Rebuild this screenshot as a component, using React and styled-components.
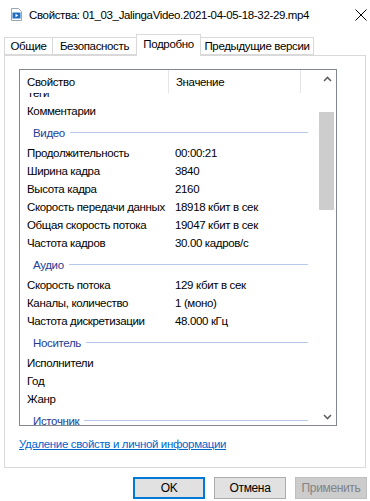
import React from 'react'
import styled, { createGlobalStyle } from 'styled-components'

const GlobalStyle = createGlobalStyle`
  html, body {
    margin: 0;
    padding: 0;
    background: #ffffff;
  }
  body {
    font-family: "Liberation Sans", Arial, sans-serif;
    font-size: 11.5px;
    letter-spacing: -0.35px;
    color: #000;
  }
`

const Window = styled.div`
  width: 370px;
  height: 501px;
  display: flex;
  flex-direction: column;
  overflow: hidden;
  background: #ffffff;
`

const TitleBar = styled.div`
  height: 29px;
  display: flex;
  align-items: center;
  padding-left: 11px;
`

const Title = styled.div`
  margin-left: 7px;
  white-space: nowrap;
`

const Close = styled.div`
  margin-left: auto;
  margin-right: 3px;
  width: 12px;
  height: 12px;
  display: flex;
`

const TabRow = styled.div`
  height: 21px;
  margin-top: 5px;
  padding-left: 4px;
  display: flex;
  align-items: flex-end;
  position: relative;
  z-index: 1;
`

const Tab = styled.div`
  box-sizing: border-box;
  width: ${p => p.$w}px;
  height: ${p => (p.$active ? 22 : 18)}px;
  margin-bottom: ${p => (p.$active ? -1 : 0)}px;
  margin-left: -1px;
  border: 1px solid #d9d9d9;
  border-bottom: ${p => (p.$active ? 'none' : '1px solid #d9d9d9')};
  background: #ffffff;
  display: flex;
  align-items: center;
  justify-content: center;
  padding-bottom: ${p => (p.$active ? 3 : 0)}px;
  white-space: nowrap;
  &:first-child {
    margin-left: 0;
  }
`

const Panel = styled.div`
  box-sizing: border-box;
  height: 413px;
  margin: 0 4px 0 4px;
  border: 1px solid #d9d9d9;
  background: #ffffff;
  padding: 13px 0 0 14px;
  display: flex;
  flex-direction: column;
`

const ListView = styled.div`
  box-sizing: border-box;
  width: 318px;
  height: 357px;
  border: 1px solid #828790;
  display: flex;
`

const ListMain = styled.div`
  width: 299px;
  display: flex;
  flex-direction: column;
  overflow: hidden;
`

const Header = styled.div`
  height: 23px;
  display: flex;
  flex-shrink: 0;
  position: relative;
  z-index: 1;
  background: #ffffff;
`

const HeaderCell = styled.div`
  box-sizing: border-box;
  width: ${p => p.$w}px;
  padding-left: 7px;
  padding-top: 1px;
  display: flex;
  align-items: center;
  border-right: ${p => (p.$sep ? '1px solid #e5e5e5' : 'none')};
  white-space: nowrap;
`

const Body = styled.div`
  flex: 1;
  overflow: hidden;
`

const Rows = styled.div`
  margin-top: -9px;
`

const Row = styled.div`
  height: 18px;
  display: grid;
  grid-template-columns: 148px 1fr;
  align-items: center;
  white-space: nowrap;
`

const Cell = styled.div`
  padding-left: 7px;
  overflow: hidden;
`

const Group = styled.div`
  height: 24px;
  display: flex;
  align-items: center;
  padding: 1px 11px 0 13px;
  box-sizing: border-box;
  color: #1e3c96;
  &::after {
    content: "";
    flex: 1;
    height: 1px;
    margin-left: 5px;
    background: #b6c9ea;
  }
`

const ScrollBar = styled.div`
  width: 17px;
  display: flex;
  flex-direction: column;
`

const ScrollArrow = styled.div`
  height: 17px;
  display: flex;
  align-items: center;
  justify-content: center;
`

const Track = styled.div`
  flex: 1;
  padding-top: 25px;
`

const Thumb = styled.div`
  width: 15px;
  height: 98px;
  background: #cdcdcd;
`

const Link = styled.a`
  margin-top: 11px;
  color: #0066cc;
  text-decoration: underline;
  align-self: flex-start;
  line-height: 15px;
`

const ButtonRow = styled.div`
  display: flex;
  justify-content: flex-end;
  gap: 9px;
  margin-top: 9px;
  padding-right: 3px;
`

const Button = styled.div`
  box-sizing: border-box;
  width: 72px;
  height: 22px;
  display: flex;
  align-items: center;
  justify-content: center;
  font-size: 12px;
  background: ${p => (p.$disabled ? '#cccccc' : '#e1e1e1')};
  color: ${p => (p.$disabled ? '#838383' : '#000')};
  border: ${p => (p.$default ? '2px solid #0078d7' : p.$disabled ? '1px solid #bfbfbf' : '1px solid #adadad')};
`

const FileIcon = () => (
  <svg width="11" height="13" viewBox="0 0 11 13">
    <path d="M0.5 0.5 H7.5 L10.5 3.5 V12.5 H0.5 Z" fill="#fff" stroke="#9aa4b0" />
    <rect x="1.5" y="4.5" width="8" height="6" fill="#1e6fc4" />
    <path d="M4.5 5.8 L7.2 7.5 L4.5 9.2 Z" fill="#fff" />
  </svg>
)

const Chevron = ({ up }) => (
  <svg width="9" height="6" viewBox="0 0 9 6">
    <polyline
      points={up ? '1,5 4.5,1.5 8,5' : '1,1 4.5,4.5 8,1'}
      fill="none"
      stroke="#606060"
      strokeWidth="1.6"
    />
  </svg>
)

const items = [
  { name: 'Теги' },
  { name: 'Комментарии' },
  { group: 'Видео' },
  { name: 'Продолжительность', value: '00:00:21' },
  { name: 'Ширина кадра', value: '3840' },
  { name: 'Высота кадра', value: '2160' },
  { name: 'Скорость передачи данных', value: '18918 кбит в сек' },
  { name: 'Общая скорость потока', value: '19047 кбит в сек' },
  { name: 'Частота кадров', value: '30.00 кадров/с' },
  { group: 'Аудио' },
  { name: 'Скорость потока', value: '129 кбит в сек' },
  { name: 'Каналы, количество', value: '1 (моно)' },
  { name: 'Частота дискретизации', value: '48.000 кГц' },
  { group: 'Носитель' },
  { name: 'Исполнители' },
  { name: 'Год' },
  { name: 'Жанр' },
  { group: 'Источник' },
]

const tabs = [
  { label: 'Общие', w: 49 },
  { label: 'Безопасность', w: 85 },
  { label: 'Подробно', w: 65, active: true },
  { label: 'Предыдущие версии', w: 114 },
]

export default function App() {
  return (
    <Window>
      <GlobalStyle />
      <TitleBar>
        <FileIcon />
        <Title>Свойства: 01_03_JalingaVideo.2021-04-05-18-32-29.mp4</Title>
        <Close>
          <svg width="12" height="12" viewBox="0 0 12 12">
            <path d="M0.5 0.5 L11.5 11.5 M11.5 0.5 L0.5 11.5" stroke="#000" strokeWidth="1" />
          </svg>
        </Close>
      </TitleBar>
      <TabRow>
        {tabs.map(t => (
          <Tab key={t.label} $w={t.w} $active={t.active}>{t.label}</Tab>
        ))}
      </TabRow>
      <Panel>
        <ListView>
          <ListMain>
            <Header>
              <HeaderCell $w={149} $sep>Свойство</HeaderCell>
              <HeaderCell $w={132} $sep>Значение</HeaderCell>
            </Header>
            <Body>
              <Rows>
                {items.map((it, i) =>
                  it.group ? (
                    <Group key={i}>{it.group}</Group>
                  ) : (
                    <Row key={i}>
                      <Cell>{it.name}</Cell>
                      <Cell>{it.value}</Cell>
                    </Row>
                  )
                )}
              </Rows>
            </Body>
          </ListMain>
          <ScrollBar>
            <ScrollArrow><Chevron up /></ScrollArrow>
            <Track><Thumb /></Track>
            <ScrollArrow><Chevron /></ScrollArrow>
          </ScrollBar>
        </ListView>
        <Link>Удаление свойств и личной информации</Link>
      </Panel>
      <ButtonRow>
        <Button $default>OK</Button>
        <Button>Отмена</Button>
        <Button $disabled>Применить</Button>
      </ButtonRow>
    </Window>
  )
}
